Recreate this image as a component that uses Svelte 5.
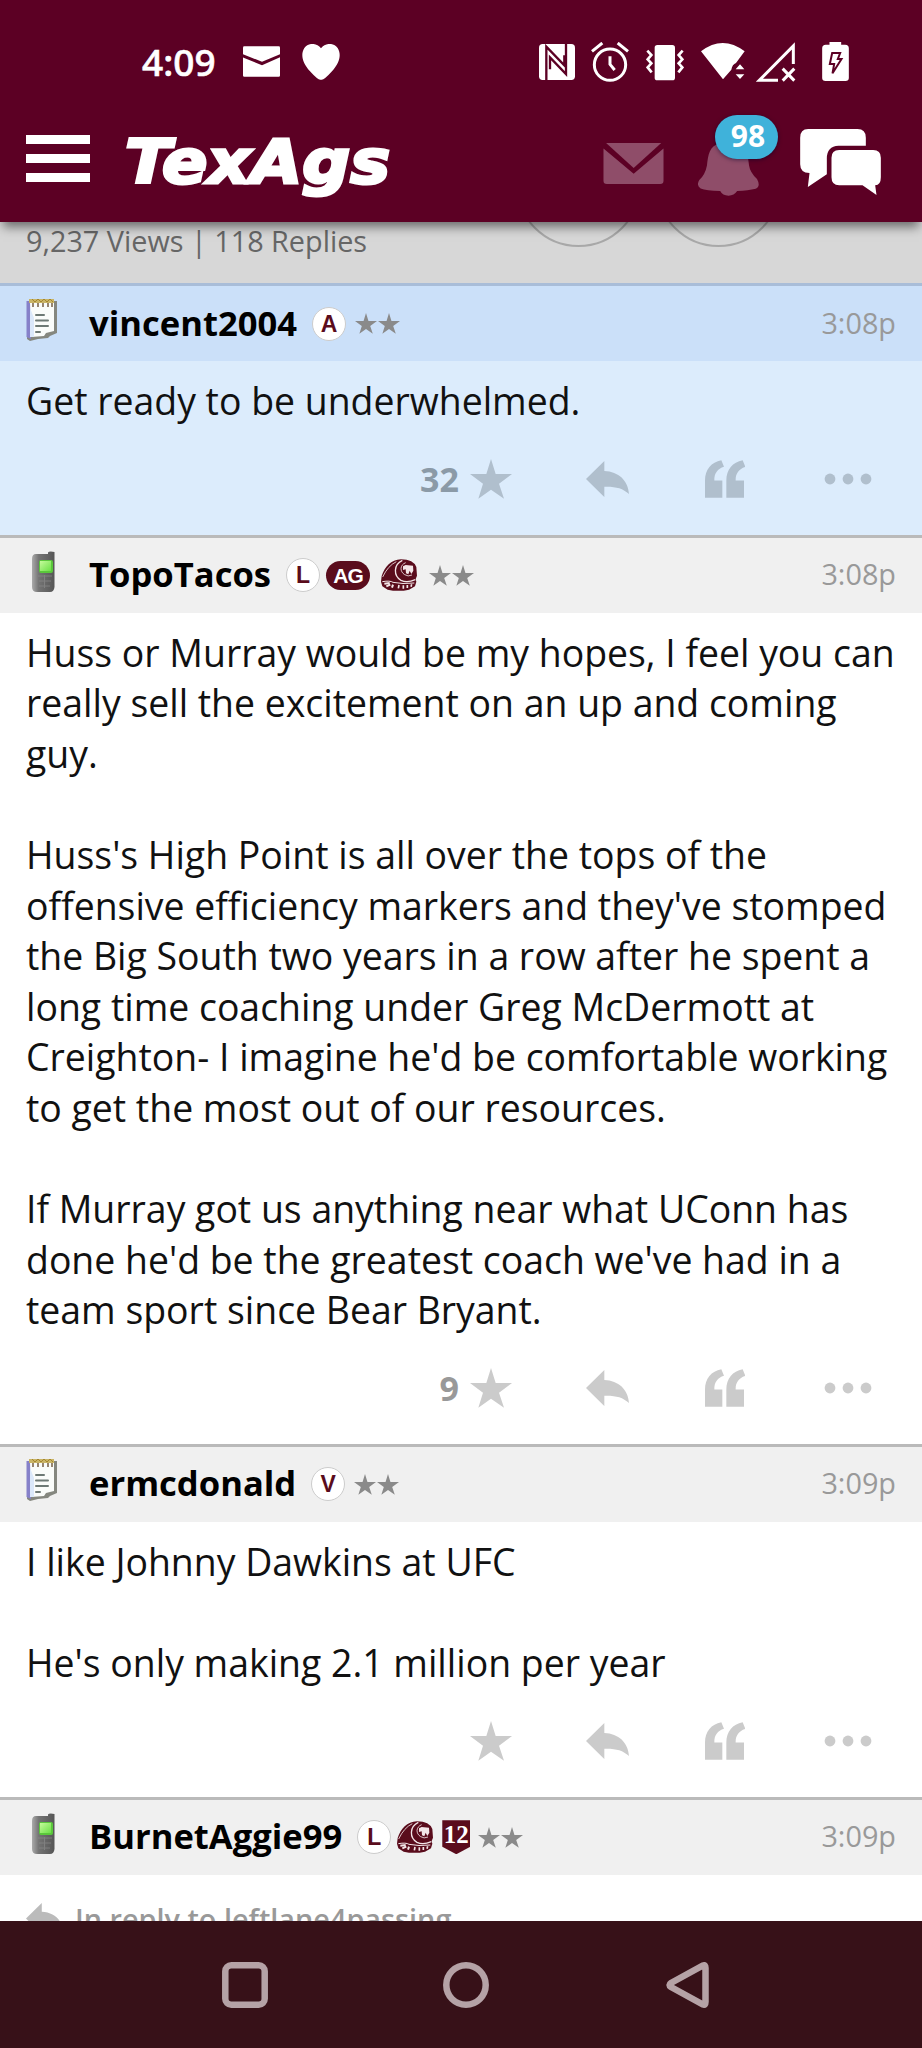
<script>
  const posts = [
    {
      author: 'vincent2004',
      device: 'desktop',
      badges: ['A'],
      time: '3:08p',
      stars: '32',
      highlighted: true,
      lines: ['Get ready to be underwhelmed.']
    },
    {
      author: 'TopoTacos',
      device: 'mobile',
      badges: ['L', 'AG', 'ring'],
      time: '3:08p',
      stars: '9',
      lines: [
        'Huss or Murray would be my hopes, I feel you can',
        'really sell the excitement on an up and coming',
        'guy.',
        '',
        "Huss's High Point is all over the tops of the",
        "offensive efficiency markers and they've stomped",
        'the Big South two years in a row after he spent a',
        'long time coaching under Greg McDermott at',
        "Creighton- I imagine he'd be comfortable working",
        'to get the most out of our resources.',
        '',
        'If Murray got us anything near what UConn has',
        "done he'd be the greatest coach we've had in a",
        'team sport since Bear Bryant.'
      ]
    },
    {
      author: 'ermcdonald',
      device: 'desktop',
      badges: ['V'],
      time: '3:09p',
      stars: '',
      lines: ['I like Johnny Dawkins at UFC', '', "He's only making 2.1 million per year"]
    },
    {
      author: 'BurnetAggie99',
      device: 'mobile',
      badges: ['L', 'ring', '12'],
      time: '3:09p',
      replyTo: 'leftlane4passing'
    }
  ];
</script>

{#snippet star(size)}
  <svg width={size} height={size * 0.95} viewBox="0 0 126 119" fill="currentColor">
    <path d="M63 0L77 45H126L87 74L102 119L63 92L25 119L39 74L0 45H49Z" />
  </svg>
{/snippet}

{#snippet replyArrow(width)}
  <svg {width} height={width * 0.84} viewBox="0 0 129 108" fill="currentColor">
    <path d="M55 0V30C98 32 126 58 129 99C110 81 88 76 55 77V108L0 54Z" />
  </svg>
{/snippet}

{#snippet notepad()}
  <svg class="device" width="32" height="44" viewBox="0 0 32 44">
    <path d="M3 3L31 3V35L24 38L22 40L12 41L4 43L1 41Z" fill="#85877f" />
    <path d="M0.500 3H5V41L0.500 39Z" fill="#8681c9" />
    <path d="M4 4H28V33L20 35L18 38L5 39Z" fill="#fafcfa" />
    <path d="M4 10L8 20V39H4Z" fill="#dbe8fa" />
    <path d="M3 1H28V5H3Z" fill="#c9b465" />
    <path d="M7 5V9M12 5V9M17 5V9M22 5V9M26 5V9" stroke="#8b7862" stroke-width="1.8" />
    <path d="M6 1L9 4L12 1L15 4L18 1L21 4L24 1L27 4" fill="none" stroke="#a5862f" />
    <path d="M10 17H18M10 22.500H22M10 28H22M10 34H14" stroke="#6d7975" stroke-width="2" stroke-linecap="round" />
  </svg>
{/snippet}

{#snippet phone()}
  <svg class="device phone" width="32" height="42" viewBox="0 0 32 42">
    <defs>
      <linearGradient id="shell">
        <stop offset="0" stop-color="#aaa" />
        <stop offset=".3" stop-color="#747474" />
        <stop offset="1" stop-color="#565656" />
      </linearGradient>
      <linearGradient id="screen" x2="1" y2="1">
        <stop offset="0" stop-color="#c5fb9b" />
        <stop offset="1" stop-color="#6be046" />
      </linearGradient>
    </defs>
    <path d="M22 1.500Q23 0 28.500 1V36Q28 41 24 41H11Q6 41 6 36V8Q6 3 10 3H22Z" fill="url(#shell)" />
    <rect x="13" y="9" width="14" height="13" rx="2" fill="#5ac73b" />
    <rect x="14" y="10" width="11" height="10" fill="url(#screen)" />
    <path d="M12 25H26M13 30H25M13 35H24M18.500 24V37" stroke="#8b8b8b" stroke-width="1" opacity=".7" />
  </svg>
{/snippet}

{#snippet ring()}
  <svg class="ring" width="36" height="32" viewBox="0 0 108 96">
    <path d="M60 1C30 2 11 24 2 51L0 68L4 82L20 92Q52 99 84 92L102 82L106 68L104 60L108 50L106 24Q98 2 60 1Z" fill="#5a0c1c" />
    <g fill="none" stroke="#f3e6e8" stroke-width="4">
      <path d="M64 4C37 17 37 50 60 64Q78 73 103 62" />
      <path d="M5 54Q21 20 46 8" stroke-width="2.5" />
      <path d="M4 68Q27 64 36 70Q64 76 100 72" stroke-width="3" />
      <path d="M10 74L26 72M16 82L28 77M36 77L33 86" stroke-width="6" />
      <path d="M54 78L52 88M67 79V89M79 78V87M92 76L90 83" stroke-width="5" />
    </g>
    <path d="M74 11C56 18 56 38 71 47Q81 54 93 48" fill="none" stroke="#f3e6e8" stroke-width="2.5" />
    <path d="M66 22L74 18L96 20L97 35L91 45L86 35L82 46L75 43L74 31L66 33Z" fill="#f3e6e8" />
  </svg>
{/snippet}

<div class="screen">
  <header>
    <div class="status-bar">
      <span class="clock">4:09</span>
      <svg class="status-mail" width="37" height="31" viewBox="0 0 111 92" fill="#fff">
        <path d="M4 0H107Q111 0 111 4V24L57 47L0 24V4Q0 0 4 0Z" />
        <path d="M0 34L57 57L111 33V88Q111 92 107 92H4Q0 92 0 88Z" />
      </svg>
      <svg class="heart" width="38" height="36" viewBox="0 0 114 108" fill="#fff">
        <path d="M57 13C43-5 18-4 7 12C-5 31 1 57 24 82Q50 111 57 107Q64 111 90 82C113 57 119 31 107 12C96-4 71-5 57 13Z" />
      </svg>

      <div class="status-icons">
        <svg width="36" height="40" viewBox="0 0 108 120">
          <rect y="6" width="108" height="108" rx="11" fill="#fff" />
          <path d="M22 116V14L76 70V40M81 4V96L33 46V82" fill="none" stroke="#5c0024" stroke-width="7" />
        </svg>
        <svg width="38" height="40" viewBox="0 0 112 120" fill="none" stroke="#fff" stroke-width="9">
          <circle cx="56" cy="68" r="47" />
          <path d="M56 43V67L70 84" />
          <path d="M2 28L33 3M110 28L79 3" />
        </svg>
        <svg width="38" height="40" viewBox="0 0 114 120">
          <rect x="26" y="9" width="61" height="106" rx="8" fill="#fff" />
          <path d="M4 26L16 39L5 52L16 64L5 76L17 91M110 26L98 39L109 52L98 64L109 76L97 91" fill="none" stroke="#fff" stroke-width="8" />
        </svg>
        <svg width="44" height="40" viewBox="0 0 132 120" fill="#fff">
          <path d="M0 28Q65-22 131 28L105 63Q94 67 91 83L66 112Z" />
          <path d="M117 67L130 82H104ZM104 97H130L117 111Z" />
        </svg>
        <svg width="40" height="40" viewBox="0 0 120 120" fill="none" stroke="#fff" stroke-width="9">
          <path d="M112 66V12L10 115H66" />
          <path d="M80 80L115 116M115 80L80 116" />
        </svg>
        <svg width="27" height="40" viewBox="0 0 80 120">
          <path d="M22 0H57V8H69Q80 8 80 19V108Q80 117 70 117H10Q0 117 0 108V19Q0 8 11 8H22Z" fill="#fff" />
          <path d="M30 33H54L47 51H58L31 94L36 66H23Z" fill="none" stroke="#5c0024" stroke-width="6" />
        </svg>
      </div>
    </div>

    <div class="toolbar">
      <div class="menu"><i></i><i></i><i></i></div>
      <svg class="logo" width="274" height="66" viewBox="0 0 274 66">
        <text x="1" y="49" textLength="265" lengthAdjust="spacingAndGlyphs">TexAgs</text>
      </svg>
      <svg class="inbox" width="61" height="41" viewBox="0 0 183 125">
        <path d="M8 0H176L92 76Z" />
        <path d="M0 17L92 94L183 17V115Q183 125 173 125H10Q0 125 0 115Z" />
      </svg>
      <div class="alerts">
        <svg width="61" height="53" viewBox="0 0 184 158">
          <path d="M67 0H117C148 7 150 35 154 67Q157 88 178 108Q190 130 174 137Q152 142 118 144Q109 158 92 158Q74 158 67 144Q25 143 8 136Q-6 127 4 111Q22 94 27 67C31 34 34 8 67 0Z" />
        </svg>
        <span class="count">98</span>
      </div>
      <svg class="chats" width="81" height="66" viewBox="0 0 242 198" fill="#fff">
        <path d="M24 0H172Q197 0 197 26V50H115Q80 52 80 88V136L23 174L28 132Q0 132 0 106V26Q0 0 24 0Z" />
        <path d="M117 63H219Q242 63 242 86V145Q242 169 225 169L229 198L187 169H117Q94 169 94 145V86Q94 63 117 63Z" />
      </svg>
    </div>
  </header>

  <main>
    <div class="topic">
      <span class="stats">9,237 Views | 118 Replies</span>
      <div class="topic-button"></div>
      <div class="topic-button"></div>
    </div>

    {#each posts as post}
      <article class:highlighted={post.highlighted}>
        <div class="post-head">
          {#if post.device === 'mobile'}
            {@render phone()}
          {:else}
            {@render notepad()}
          {/if}
          <strong class="author">{post.author}</strong>
          <div class="badges">
            {#each post.badges as badge}
              {#if badge === 'ring'}
                {@render ring()}
              {:else if badge === 'AG'}
                <span class="pill">AG</span>
              {:else if badge === '12'}
                <span class="shield">12</span>
              {:else}
                <span class="letter">{badge}</span>
              {/if}
            {/each}
            <span class="rank">{@render star(22)}{@render star(22)}</span>
          </div>
          <time>{post.time}</time>
        </div>

        {#if post.replyTo}
          <div class="reply-to">
            {@render replyArrow(37)}
            <span>In reply to {post.replyTo}</span>
          </div>
        {:else}
          <div class="post-body">
            {#each post.lines as line}
              <p>{line}</p>
            {/each}
          </div>
          <div class="actions">
            <span class="total">{post.stars}</span>
            {@render star(42)}
            <div class="reply">{@render replyArrow(43)}</div>
            <svg class="quote" width="40" height="38" viewBox="0 0 120 113" fill="currentColor">
              <path d="M49 0L57 20C38 26 27 40 28 61H52V113H0V61C0 27 19 6 49 0Z" />
              <path d="M113 0L121 20C102 26 91 40 92 61H117V113H64V61C64 27 83 6 113 0Z" />
            </svg>
            <svg class="more" width="48" height="12" viewBox="0 0 48 12" fill="currentColor">
              <circle cx="6" cy="6" r="5.4" />
              <circle cx="24" cy="6" r="5.4" />
              <circle cx="42" cy="6" r="5.4" />
            </svg>
          </div>
        {/if}
      </article>
    {/each}
  </main>

  <nav>
    <svg width="46" height="46" viewBox="0 0 46 46"><rect x="3.3" y="3.3" width="39.4" height="39.4" rx="6" /></svg>
    <svg width="46" height="46" viewBox="0 0 46 46"><circle cx="23" cy="23" r="19.7" /></svg>
    <svg width="43" height="46" viewBox="0 0 43 46"><path d="M37 3.5Q39.5 2.5 39.5 6V40Q39.5 43.5 37 42.5L5 25Q2 23 5 21Z" /></svg>
  </nav>
</div>

<style>
  :global(body) {
    background: #fff;
  }

  .screen {
    width: 922px;
    height: 2048px;
    display: flex;
    flex-direction: column;
    overflow: hidden;
    font-family: 'Open Sans', 'Noto Sans', sans-serif;
    color: #111;
  }

  svg {
    display: block;
    flex: none;
  }

  /* Header */
  header {
    position: relative;
    z-index: 1;
    height: 222px;
    flex: none;
    background: #5c0024;
    box-shadow: 0 8px 10px -3px rgba(0, 0, 0, 0.5);
  }

  .status-bar {
    height: 82px;
    padding: 42px 73px 0 141px;
    box-sizing: border-box;
    display: flex;
    align-items: flex-start;
  }

  .clock {
    width: 101px;
    padding-left: 1px;
    color: #fff;
    font-family: 'Noto Sans', sans-serif;
    font-size: 37px;
    font-weight: 500;
    line-height: 40px;
    -webkit-text-stroke: 0.6px #fff;
  }

  .status-mail {
    margin-top: 4px;
  }

  .heart {
    margin: 2px 0 0 22px;
  }

  .status-icons {
    display: flex;
    margin-left: auto;
  }

  .status-icons svg {
    margin-left: 17px;
  }

  .status-icons svg:nth-child(2) {
    margin-left: 16px;
  }

  .status-icons svg:nth-child(5) {
    margin-left: 11px;
  }

  .status-icons svg:last-child {
    margin-left: 26px;
  }

  .toolbar {
    display: flex;
    align-items: flex-start;
    height: 140px;
    padding: 0 41px 0 26px;
  }

  .menu {
    display: flex;
    flex-direction: column;
    gap: 10px;
    width: 64px;
    margin-top: 53px;
  }

  .menu i {
    height: 9px;
    background: #fff;
  }

  .logo {
    margin: 52px 0 0 34px;
    overflow: visible;
  }

  .logo text {
    font: italic bold 60px 'DejaVu Sans', sans-serif;
    fill: #fff;
    stroke: #fff;
    stroke-width: 3px;
  }

  .inbox {
    margin: 61px 34px 0 auto;
    fill: #8f4d69;
  }

  .alerts {
    position: relative;
    margin: 61px 41px 0 0;
  }

  .alerts svg {
    fill: #8f4d69;
  }

  .count {
    position: absolute;
    left: 17px;
    top: -28px;
    width: 63px;
    height: 44px;
    padding-left: 3px;
    box-sizing: border-box;
    border-radius: 22px;
    background: #3fb2da;
    box-shadow: 0 1px 4px rgba(0, 0, 40, 0.5);
    color: #fff;
    font-size: 30px;
    font-weight: 700;
    line-height: 41px;
    text-align: center;
  }

  .chats {
    margin-top: 47px;
  }

  /* Topic strip */
  main {
    flex: 1;
    min-height: 0;
    overflow: hidden;
  }

  .topic {
    display: flex;
    height: 61px;
    padding-left: 26px;
    overflow: hidden;
    background: #d7d7d7;
  }

  .stats {
    width: 490px;
    color: #666;
    font-size: 28.8px;
    line-height: 38px;
  }

  .topic-button {
    width: 125px;
    height: 125px;
    margin: -100px 15px 0 0;
    box-sizing: border-box;
    border: 2px solid #a8a8a8;
    border-radius: 50%;
    flex: none;
  }

  /* Posts */
  article {
    border-top: 3px solid #bababa;
  }

  .post-head {
    display: flex;
    align-items: center;
    height: 75px;
    padding: 0 26px;
    background: #f0f0f0;
  }

  .highlighted {
    border-top-color: #a9bdd8;
    background: #dcecfc;
  }

  .highlighted .post-head {
    background: #cbe0f9;
  }

  .device {
    margin: -8px 31px 0 0;
  }

  .phone {
    margin-top: -6px;
  }

  .author {
    margin-top: -2px;
    color: #000;
    font-size: 34.6px;
    line-height: 48px;
  }

  .badges {
    display: flex;
    align-items: center;
    margin-left: 15px;
  }

  .letter {
    width: 34px;
    height: 34px;
    margin-right: 6px;
    box-sizing: border-box;
    border: 1.5px solid #ccc;
    border-radius: 50%;
    background: #fff;
    color: #5a0c1c;
    font: bold 23px/32px 'Liberation Sans', sans-serif;
    text-align: center;
  }

  .pill {
    width: 44px;
    height: 29px;
    margin-right: 11px;
    border-radius: 15px;
    background: #5a0c1c;
    color: #fff;
    font: bold 21px/29px 'Liberation Sans', sans-serif;
    letter-spacing: -1px;
    text-align: center;
  }

  .ring {
    margin-right: 9px;
  }

  .shield {
    width: 28px;
    height: 34px;
    margin-right: 5px;
    background: #5a0c1c;
    clip-path: polygon(0 0, 100% 0, 100% 78%, 50% 100%, 0 78%);
    color: #fff;
    font: bold 25px/29px 'Liberation Serif', serif;
    text-align: center;
  }

  .rank {
    display: flex;
    gap: 1px;
    margin-left: 3px;
    color: #8a8a8a;
  }

  time {
    margin: -2px 0 0 auto;
    color: #999;
    font-size: 28.8px;
    line-height: 40px;
  }

  .post-body {
    padding: 15px 26px 0;
  }

  .post-body p {
    height: 50.6px;
    margin: 0;
    font-size: 37.4px;
    line-height: 50.6px;
    white-space: nowrap;
  }

  .actions {
    display: flex;
    align-items: center;
    justify-content: flex-end;
    height: 104px;
    padding: 0 50px 4px 0;
    color: #cbcbcb;
  }

  .total {
    margin-right: 11px;
    color: #999;
    font-size: 34px;
    font-weight: 700;
  }

  .highlighted .actions {
    color: #b0bfcd;
  }

  .highlighted .total {
    color: #8b9aa7;
  }

  .reply {
    margin: 0 76px 0 74px;
  }

  .more {
    margin-left: 79px;
  }

  .reply-to {
    display: flex;
    padding: 28px 26px 0;
    color: #bbb;
  }

  .reply-to span {
    margin: -4px 0 0 12px;
    color: #999;
    font-size: 28.8px;
    font-weight: 600;
    line-height: 40px;
  }

  /* System navigation */
  nav {
    display: flex;
    align-items: center;
    justify-content: space-between;
    height: 127px;
    padding: 0 213px 0 222px;
    flex: none;
    background: #371118;
  }

  nav svg {
    fill: none;
    stroke: #b5a2a6;
    stroke-width: 6.5px;
  }

  nav svg:nth-child(2) {
    margin-right: 2px;
  }
</style>
